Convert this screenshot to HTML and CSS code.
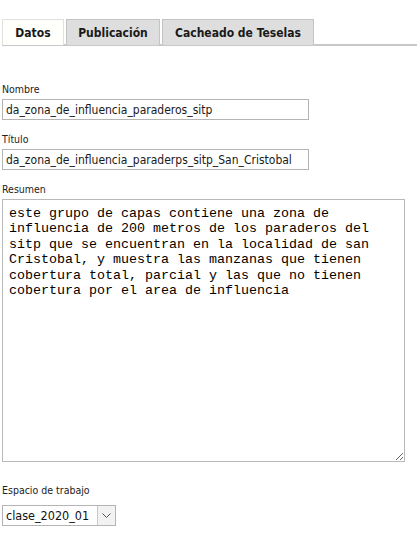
FILE: index.html
```html
<!DOCTYPE html>
<html>
<head>
<meta charset="utf-8">
<link rel="stylesheet" href="styles.css">
</head>
<body>
<div class="tabs">
  <div class="tab active">Datos</div>
  <div class="tab">Publicación</div>
  <div class="tab">Cacheado de Teselas</div>
</div>
<div class="form">
  <div class="field">
    <label class="lbl">Nombre</label>
    <input class="txt" type="text" value="da_zona_de_influencia_paraderos_sitp">
  </div>
  <div class="field">
    <label class="lbl">Título</label>
    <input class="txt" type="text" value="da_zona_de_influencia_paraderps_sitp_San_Cristobal">
  </div>
  <div class="field">
    <label class="lbl">Resumen</label>
    <textarea class="area">este grupo de capas contiene una zona de influencia de 200 metros de los paraderos del sitp que se encuentran en la localidad de san Cristobal, y muestra las manzanas que tienen cobertura total, parcial y las que no tienen cobertura por el area de influencia</textarea>
  </div>
  <div class="field ws">
    <label class="lbl">Espacio de trabajo</label>
    <div class="select">
      <span class="sel-val">clase_2020_01</span>
      <span class="sel-btn"><svg width="9" height="6" viewBox="0 0 9 6"><path d="M0.5 0.5 L4.5 4.5 L8.5 0.5" fill="none" stroke="#555" stroke-width="1"/></svg></span>
    </div>
  </div>
</div>
</body>
</html>
```
FILE: styles.css
```css
html, body { margin: 0; padding: 0; background: #fff; }
body { font-family: "DejaVu Sans Condensed", "DejaVu Sans", sans-serif; color: #000; padding: 18px 0 0 2px; }
.tabs { display: flex; gap: 2px; border-bottom: 2px solid #c8c8c8; height: 26px; align-items: flex-end; }
.tab { box-sizing: border-box; border: 1px solid #c4c4c4; border-bottom: none; background: #dedede; font-weight: bold; font-size: 12px; display: flex; align-items: center; justify-content: center; color: #1a1a1a; margin-bottom: -1px; height: 26px; }
.tab.active { background: #fffffb; border-color: #e0e0e0; width: 62px; }
.tab:nth-child(2) { width: 94px; }
.tab:nth-child(3) { width: 152px; }
.form { padding-top: 37px; }
.field { display: flex; flex-direction: column; align-items: flex-start; }
.lbl { font-size: 10.5px; line-height: 13px; color: #222; margin-bottom: 3px; }
.txt { box-sizing: border-box; width: 307px; height: 21px; border: 1px solid #b4b4b4; padding: 0 3px; font-family: inherit; font-size: 12px; color: #1a1a1a; margin: 0 0 13px 0; outline: none; }
.area { box-sizing: border-box; width: 403px; height: 263px; border: 1px solid #b9b9b9; padding: 6px 6px; margin: 0 0 22px 0; font-family: "Liberation Mono", monospace; font-size: 13.33px; line-height: 15.4px; resize: both; color: #000; }
.select { display: flex; border: 1px solid #b4b4b4; height: 21px; box-sizing: border-box; width: 114px; margin-top: 5px; }
.sel-val { font-size: 12.5px; padding: 0 3px; line-height: 19px; flex: 1; color: #111; }
.sel-btn { width: 17px; border-left: 1px solid #c8c8c8; background: #f2f2f2; display: flex; align-items: center; justify-content: center; }
```
